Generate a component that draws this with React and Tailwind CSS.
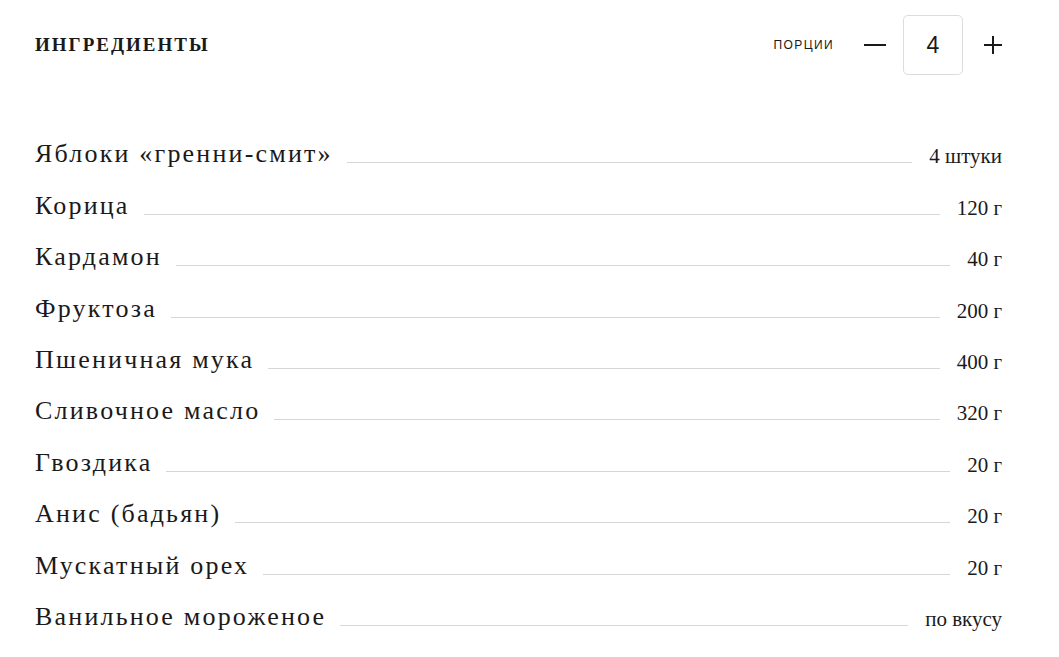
const ingredients = [
  { name: 'Яблоки «гренни-смит»', amount: '4 штуки' },
  { name: 'Корица', amount: '120 г' },
  { name: 'Кардамон', amount: '40 г' },
  { name: 'Фруктоза', amount: '200 г' },
  { name: 'Пшеничная мука', amount: '400 г' },
  { name: 'Сливочное масло', amount: '320 г' },
  { name: 'Гвоздика', amount: '20 г' },
  { name: 'Анис (бадьян)', amount: '20 г' },
  { name: 'Мускатный орех', amount: '20 г' },
  { name: 'Ванильное мороженое', amount: 'по вкусу' },
];

const App = () => {
  return (
    <div className="w-[1059px] h-[657px] bg-white text-[#1a1a1a] pl-[35px] pr-[57px] pt-[15px]">
      <div className="flex items-center justify-between h-[60px]">
        <h2 className="font-['Liberation_Serif',serif] font-bold text-[19px] tracking-[2px]">
          ИНГРЕДИЕНТЫ
        </h2>
        <div className="flex items-center">
          <span className="font-['Liberation_Sans',sans-serif] text-[12px] tracking-[1.4px] uppercase mr-[30px]">
            порции
          </span>
          <button className="w-[22px] h-[2px] bg-[#1a1a1a] mr-[17px]" aria-label="minus"></button>
          <div className="w-[60px] h-[60px] border border-[#dcdcdc] rounded-[5px] flex items-center justify-center font-['Liberation_Sans',sans-serif] text-[23px]">
            4
          </div>
          <button className="relative w-[18px] h-[18px] ml-[21px]" aria-label="plus">
            <span className="absolute left-0 top-[8px] w-[18px] h-[1.5px] bg-[#1a1a1a]"></span>
            <span className="absolute top-0 left-[8px] w-[1.5px] h-[18px] bg-[#1a1a1a]"></span>
          </button>
        </div>
      </div>

      <ul className="mt-[41px]">
        {ingredients.map((item) => (
          <li key={item.name} className="flex items-end h-[51.4px]">
            <span className="font-['Liberation_Serif',serif] text-[26px] tracking-[2.2px] leading-none whitespace-nowrap">
              {item.name}
            </span>
            <span className="flex-1 border-b border-[#d6d6d6] ml-[14px] mr-[17px] mb-[4px]"></span>
            <span className="font-['Liberation_Serif',serif] text-[21px] leading-none whitespace-nowrap">
              {item.amount}
            </span>
          </li>
        ))}
      </ul>
    </div>
  );
};

export default App;
